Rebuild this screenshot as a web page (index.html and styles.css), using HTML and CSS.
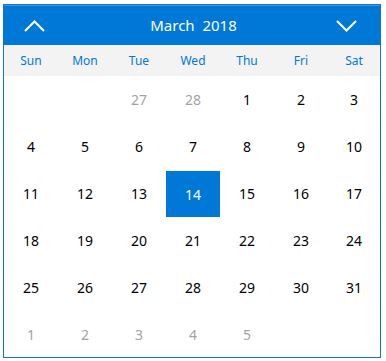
FILE: index.html
```html
<!DOCTYPE html>
<html>
<head>
	<meta charset="utf-8" />
	<title>Calendar</title>
	<link rel="stylesheet" href="styles.css">
</head>
<body>
	<div class="calendar">
		<div class="head">
			<span class="arrow" id="prev">
				<svg width="21" height="12" viewBox="0 0 21 12"><polyline points="1,11 10.5,1.5 20,11" /></svg>
			</span>
			<div class="title">March&nbsp; 2018</div>
			<span class="arrow" id="next">
				<svg width="21" height="12" viewBox="0 0 21 12"><polyline points="1,1 10.5,10.5 20,1" /></svg>
			</span>
		</div>
		<ul class="week">
			<li>Sun</li><li>Mon</li><li>Tue</li><li>Wed</li><li>Thu</li><li>Fri</li><li>Sat</li>
		</ul>
		<ul class="days" id="days"></ul>
	</div>
	<script type="text/javascript">
		var days = document.getElementById('days');
		var list = ['', '', 'o27', 'o28', 1, 2, 3];
		for(var i = 4; i <= 31; i++){
			list.push(i);
		}
		for(var j = 1; j <= 5; j++){
			list.push('o' + j);
		}
		list.push('');
		for(var k = 0; k < list.length; k++){
			var li = document.createElement('li');
			var v = list[k];
			if(typeof v === 'string' && v.charAt(0) === 'o'){
				li.className = 'other';
				li.innerHTML = v.substring(1);
			}else{
				li.innerHTML = v;
			}
			if(v === 14){
				li.className = 'active';
			}
			days.appendChild(li);
		}
	</script>
</body>
</html>
```

FILE: styles.css
```css
*{
	padding: 0px;
	margin: 0px;
	box-sizing: border-box;
}
body{
	padding: 4px 0 0 3px;
	background: #fff;
	font-family: "Noto Sans", "Open Sans", sans-serif;
}
ul,li{
	list-style: none;
}
.calendar{
	width: 378px;
	height: 354px;
	border: 1px solid #1473c6;
	overflow: hidden;
}
.head{
	display: flex;
	align-items: center;
	height: 40px;
	padding: 0 23px 0 20px;
	background: #0078d7;
	border-top: 1px solid #3d96e0;
	color: #fff;
}
.arrow{
	display: flex;
	width: 21px;
	height: 12px;
	cursor: pointer;
}
.arrow svg polyline{
	fill: none;
	stroke: #fff;
	stroke-width: 2;
}
.title{
	flex: 1;
	text-align: center;
	padding-left: 6px;
	font-size: 15px;
	line-height: 20px;
	margin-top: -1px;
}
.week{
	display: grid;
	grid-template-columns: repeat(6, 54px) 1fr;
	height: 31px;
	background: #f3f3f3;
	align-items: center;
}
.week li{
	text-align: center;
	font-size: 12px;
	color: #0078d7;
}
.days{
	display: grid;
	grid-template-columns: repeat(6, 54px) 1fr;
	grid-auto-rows: 47px;
}
.days li{
	display: flex;
	align-items: center;
	justify-content: center;
	font-size: 14px;
	color: #000;
}
.days .other{
	color: #a3a3a3;
}
.days .active{
	background: #0078d7;
	color: #fff;
	margin-top: 1px;
}
```
